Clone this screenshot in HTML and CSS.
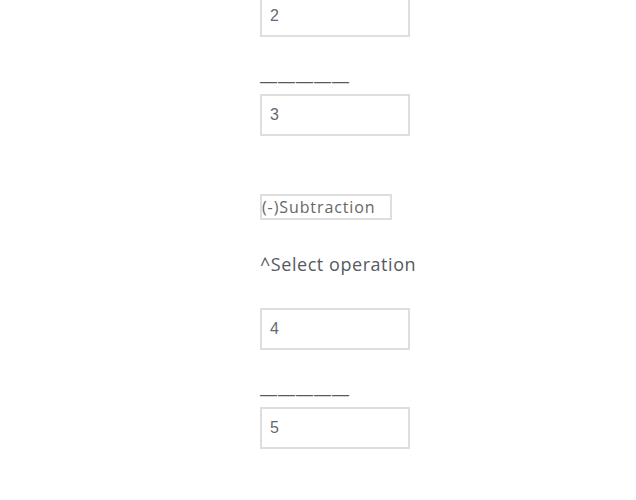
FILE: index.html
```html
<!DOCTYPE html>
<html lang="en">
<head>
	<meta charset="UTF-8">
	<meta name="viewport" content="width=device-width, initial-scale=1.0">
	<title>Calculator</title>
	<link rel="stylesheet" href="styles.css">
</head>

<body>
<div id="calculator">
	<div class="operation-block">
		<input class="number-input" type="text" value="2">
		<div class="divider">—————</div>
		<input class="number-input" type="text" value="3">
	</div>

	<div class="operation-select">
		<select id="operation">
			<option>(-)Subtraction</option>
		</select>
		<div class="select-label">^Select operation</div>
	</div>

	<div class="operation-block">
		<input class="number-input" type="text" value="4">
		<div class="divider">—————</div>
		<input class="number-input" type="text" value="5">
	</div>
</div>
</body>
</html>
```

FILE: styles.css
```css
html {
	font-family: "Open Sans", Arial, sans-serif;
	background-color: white;
}
body {
	margin: 0;
}
#calculator {
	display: flex;
	flex-direction: column;
	align-items: flex-start;
	padding-left: 260px;
	margin-top: -5px;
}

.operation-block {
	display: flex;
	flex-direction: column;
	align-items: flex-start;
}

.number-input {
	box-sizing: border-box;
	width: 150px;
	height: 42px;
	margin: 0;
	padding: 0 8px;
	border: 2px solid #dedede;
	font-family: "Liberation Sans", Arial, sans-serif;
	font-size: 16px;
	color: #666a70;
	outline: none;
}

.divider {
	font-family: "Liberation Sans", Arial, sans-serif;
	font-size: 17px;
	letter-spacing: 1px;
	line-height: 17px;
	color: #5a5a5a;
	margin-top: 36px;
	margin-bottom: 4px;
}

.operation-select {
	display: flex;
	flex-direction: column;
	align-items: flex-start;
	margin-top: 58px;
	margin-bottom: 32px;
}

#operation {
	box-sizing: border-box;
	height: 26px;
	width: 132px;
	margin: 0;
	padding: 0;
	border: 2px solid #dedede;
	border-radius: 0;
	background: white;
	font-family: "Open Sans", Arial, sans-serif;
	font-size: 16px;
	letter-spacing: 0.9px;
	color: #666;
	appearance: none;
	-webkit-appearance: none;
}

.select-label {
	font-size: 18px;
	letter-spacing: 0.55px;
	color: #555a60;
	margin-top: 32px;
}
```
